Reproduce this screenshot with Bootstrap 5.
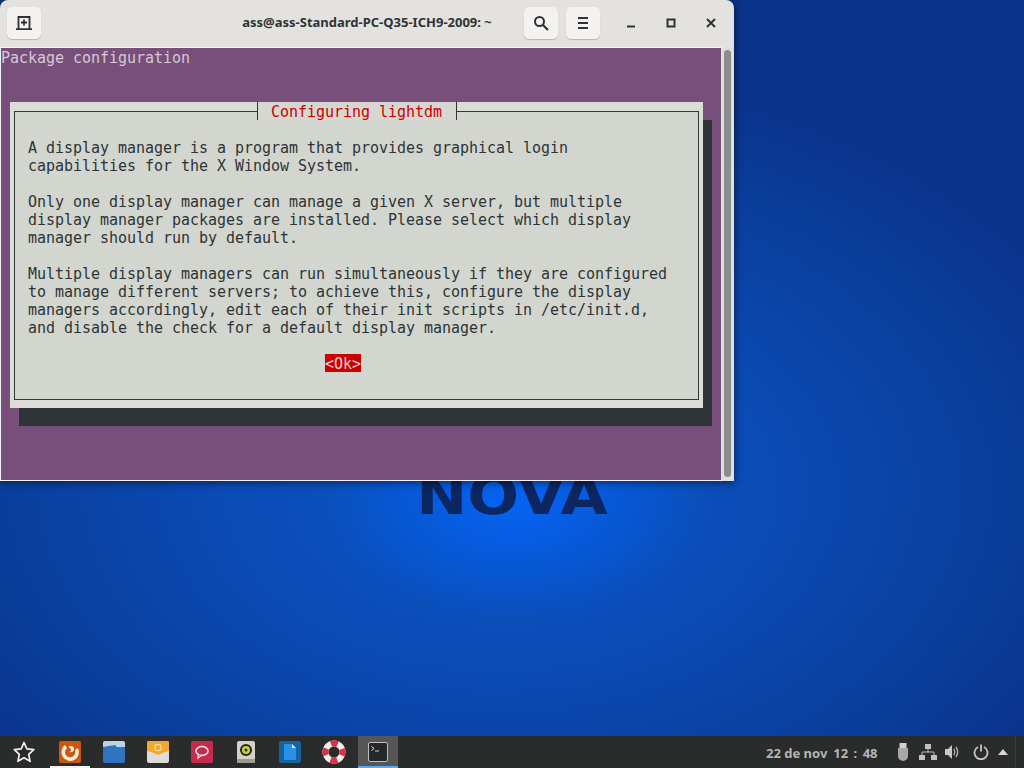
<!DOCTYPE html>
<html lang="es">
<head>
<meta charset="utf-8">
<title>Terminal</title>
<link href="https://cdn.jsdelivr.net/npm/bootstrap@5.3.0/dist/css/bootstrap.min.css" rel="stylesheet">
<style>
html,body{height:100%;margin:0;overflow:hidden}
.desk{position:relative;width:1024px;height:768px;overflow:hidden;background:radial-gradient(ellipse 190px 120px at 515px 500px,rgba(5,100,245,.95) 0%,rgba(5,95,235,.55) 50%,rgba(5,90,225,0) 100%),radial-gradient(ellipse 640px 420px at 500px 490px,#0a55c8 0%,#0a4cb6 40%,#0a3f9e 75%,#0b348c 100%),#0b348c}
.logo-txt{position:absolute;left:412px;top:466px;width:200px;text-align:center;font:700 54px/60px "DejaVu Sans",sans-serif;color:#0b2660;transform:scaleX(1.13)}
.term-win{position:absolute;left:0;top:0;width:734px;height:481px;background:#e4e2de;border-radius:8px 8px 0 0;box-shadow:0 1px 9px rgba(0,0,0,.6)}
.head-bar{height:47px;padding:7px 3px 0 7px}
.hbtn{width:34px;height:32px;background:#f3f2f0;border-radius:5px;box-shadow:0 1px 1px rgba(0,0,0,.2);flex:none}
.hbtn-gap{margin-right:8px}
.wbtn-first{margin-left:11px}
.head-title{left:0;width:734px;top:13px;position:absolute;text-align:center;font:700 13px/18px "Noto Sans","Open Sans",sans-serif;color:#2e3436}
.wbtn{width:40px;height:32px;flex:none}
.term-body{height:432px;margin:1px 0 0 1px;width:733px}
.term-screen{position:relative;width:720px;height:432px;background:#784f7b;font:15px/18px "DejaVu Sans Mono",monospace;letter-spacing:-.03px;color:#d6c8d4;box-shadow:0 0 0 1px #f4f4f4}
.pkg-line{padding-top:1px;white-space:pre}
.dlg-shadow{position:absolute;left:18px;top:72px;width:693px;height:306px;background:#2f3436}
.dlg{position:absolute;left:9px;top:54px;width:693px;height:306px;background:#dcdcd8}
.dlg-frame{position:absolute;left:4px;top:9px;width:685px;height:289px;border:1px solid #2f3a38;background:#d2d6ce}
.dlg-title{position:absolute;left:247px;top:0;width:200px;height:18px;padding:1px 0 0 13px;background:#d5d7d0;border-left:1px solid #2f3436;border-right:1px solid #2f3436;color:#cc0000;white-space:pre}
.dlg-text{position:absolute;left:18px;top:37px;color:#2e3436;white-space:pre}
.ok-btn{position:absolute;left:315px;top:252px;width:36px;height:18px;padding-top:1px;background:#cc0000;color:#e6d6d0;white-space:pre}
.sbar-track{width:13px;height:432px;background:#dfdfdb;position:relative}
.sbar-thumb{width:7px;height:427px;margin:2px 0 0 3px;background:#8b8d8c;border-radius:4px}
.dock{position:absolute;left:0;bottom:0;width:1024px;height:32px;background:#2a2b2b}
.dslot{width:44px;height:32px;flex:none;position:relative}
.dslot.first{width:40px;margin-left:2px;margin-right:2px}
.dslot.on::after{content:"";position:absolute;left:0;right:0;bottom:0;height:2px;background:#f2f2f2}
.dslot.cur{width:40px;margin-left:2px;background:#565656}
.dslot.cur::after{content:"";position:absolute;left:0;right:0;bottom:0;height:2px;background:#5aa9ee}
.star-slot{width:48px;height:32px;flex:none}
.tray-date{font:700 13px/32px "Noto Sans","Open Sans",sans-serif;color:#b6b6b6;position:absolute;left:766px;top:1px;white-space:pre}
.clock-part{margin-left:6px;word-spacing:2px}
.tray{position:absolute;left:891px;top:0;height:32px}
.ts{height:32px;flex:none}
.ts-a{width:24px}.ts-b{width:26px}.ts-c{width:32px}.ts-d{width:12px}
.tray-end{position:absolute;left:1015px;top:0;width:1px;height:32px;background:#3c3c3c}
</style>
</head>
<body>
<div class="desk">
  <div class="logo-txt">NOVA</div>

  <div class="term-win">
    <div class="head-bar d-flex align-items-start">
      <div class="hbtn d-flex align-items-center justify-content-center">
        <svg width="16" height="16" viewBox="0 0 16 16"><path d="M2.500 14V2h11v12M0 14.200h16" fill="none" stroke="#2e3436" stroke-width="1.800"/><path d="M8 4.500v6M5 7.500h6" stroke="#2e3436" stroke-width="1.800"/></svg>
      </div>
      <div class="head-title">ass@ass-Standard-PC-Q35-ICH9-2009: ~</div>
      <div class="ms-auto d-flex">
        <div class="hbtn hbtn-gap d-flex align-items-center justify-content-center">
          <svg width="16" height="16" viewBox="0 0 16 16"><circle cx="6.500" cy="6.500" r="4.500" fill="none" stroke="#2e3436" stroke-width="2"/><path d="M10 10l5 5" stroke="#2e3436" stroke-width="2.200"/></svg>
        </div>
        <div class="hbtn d-flex align-items-center justify-content-center">
          <svg width="16" height="16" viewBox="0 0 16 16"><path d="M3 3h10M3 8h10M3 13h10" stroke="#2e3436" stroke-width="2"/></svg>
        </div>
        <div class="wbtn wbtn-first d-flex align-items-center justify-content-center">
          <svg width="10" height="10" viewBox="0 0 10 10"><path d="M1 8.500h8" stroke="#2e3436" stroke-width="2"/></svg>
        </div>
        <div class="wbtn d-flex align-items-center justify-content-center">
          <svg width="10" height="10" viewBox="0 0 10 10"><rect x="1.500" y="1.500" width="7" height="7" fill="none" stroke="#2e3436" stroke-width="2"/></svg>
        </div>
        <div class="wbtn d-flex align-items-center justify-content-center">
          <svg width="10" height="10" viewBox="0 0 10 10"><path d="M1 1l8 8M9 1l-8 8" stroke="#2e3436" stroke-width="2"/></svg>
        </div>
      </div>
    </div>
    <div class="term-body d-flex">
      <div class="term-screen">
        <div class="pkg-line">Package configuration</div>
        <div class="dlg-shadow"></div>
        <div class="dlg">
          <div class="dlg-frame"></div>
          <div class="dlg-title">Configuring lightdm</div>
          <div class="dlg-text">A display manager is a program that provides graphical login
capabilities for the X Window System.

Only one display manager can manage a given X server, but multiple
display manager packages are installed. Please select which display
manager should run by default.

Multiple display managers can run simultaneously if they are configured
to manage different servers; to achieve this, configure the display
managers accordingly, edit each of their init scripts in /etc/init.d,
and disable the check for a default display manager.</div>
          <div class="ok-btn">&lt;Ok&gt;</div>
        </div>
      </div>
      <div class="sbar-track"><div class="sbar-thumb"></div></div>
    </div>
  </div>

  <div class="dock d-flex align-items-center">
    <div class="star-slot d-flex align-items-center justify-content-center">
      <svg width="24" height="24" viewBox="0 0 24 24"><path d="M12 2.500l2.900 6.400 6.900.8-5.100 4.700 1.400 6.900-6.100-3.500-6.100 3.500 1.400-6.900L2.300 9.700l6.900-.8z" fill="none" stroke="#f2f2f2" stroke-width="1.700" stroke-linejoin="round"/></svg>
    </div>
    <div class="dslot first on d-flex align-items-center justify-content-center">
      <svg width="22" height="22" viewBox="0 0 22 22"><rect width="22" height="22" rx="2" fill="#c9590f"/><path d="M7 5.500A7 7 0 1 0 17.500 8" fill="none" stroke="#f8ecdc" stroke-width="3.600"/><path d="M9.500 5.500c3-1.500 5.500 0 5.500 2.500 0 2.500-2.500 4-4.500 3 1.500-.5 2-1.500 1.500-2.500C11.500 7.500 10.500 7 9.500 5.500z" fill="#f8ecdc"/></svg>
    </div>
    <div class="dslot d-flex align-items-center justify-content-center">
      <svg width="22" height="22" viewBox="0 0 22 22"><rect width="22" height="22" rx="2" fill="#2f74bd"/><path d="M0 2a2 2 0 0 1 2-2h18a2 2 0 0 1 2 2v4H14l-2-2-12 2z" fill="#bcd3e6"/></svg>
    </div>
    <div class="dslot d-flex align-items-center justify-content-center">
      <svg width="22" height="22" viewBox="0 0 22 22"><rect width="22" height="22" rx="2" fill="#dcdcd8"/><path d="M0 2a2 2 0 0 1 2-2h18a2 2 0 0 1 2 2v8l-4 1-7 3-7-3-4-1z" fill="#f0a92e"/><circle cx="11" cy="6.500" r="3.200" fill="none" stroke="#f8dfa6" stroke-width="1.200"/></svg>
    </div>
    <div class="dslot d-flex align-items-center justify-content-center">
      <svg width="22" height="22" viewBox="0 0 22 22"><rect width="22" height="22" rx="2" fill="#c72a4c"/><ellipse cx="11" cy="10" rx="6" ry="4.500" fill="none" stroke="#f6e6e6" stroke-width="1.600"/><path d="M7.500 13.500l-.5 3.500 3.500-2.500" fill="#c72a4c" stroke="#f6e6e6" stroke-width="1.400"/></svg>
    </div>
    <div class="dslot d-flex align-items-center justify-content-center">
      <svg width="18" height="22" viewBox="0 0 18 22"><rect width="18" height="22" rx="2" fill="#d4d2c6"/><rect y="18" width="18" height="4" fill="#9d9b90"/><circle cx="9" cy="9" r="6" fill="#23251e"/><circle cx="9" cy="9" r="4" fill="#c8d62a"/><circle cx="9" cy="9" r="1.500" fill="#23251e"/></svg>
    </div>
    <div class="dslot d-flex align-items-center justify-content-center">
      <svg width="22" height="22" viewBox="0 0 22 22"><rect width="22" height="22" rx="2" fill="#14629e"/><path d="M5 3h8l4 4v12H5z" fill="#2a8fe6"/><path d="M13 3l4 4h-4z" fill="#cfe6f6"/></svg>
    </div>
    <div class="dslot d-flex align-items-center justify-content-center">
      <svg width="24" height="24" viewBox="0 0 24 24"><circle cx="12" cy="12" r="8.500" fill="none" stroke="#f2efe9" stroke-width="6"/><circle cx="12" cy="12" r="8.500" fill="none" stroke="#d9314a" stroke-width="6" stroke-dasharray="6.700 6.650" stroke-dashoffset="3.300"/></svg>
    </div>
    <div class="dslot cur d-flex align-items-center justify-content-center">
      <svg width="20" height="20" viewBox="0 0 20 20"><rect x=".5" y=".5" width="19" height="19" rx="1.500" fill="#24282a" stroke="#bdbdbd"/><path d="M3.500 4.500l2.500 2-2.500 2" fill="none" stroke="#e8e8e8"/><path d="M7 9h4" stroke="#c8c8c8"/></svg>
    </div>
    <div class="tray-date">22 de nov<span class="clock-part">12 : 48</span></div>
    <div class="tray d-flex align-items-center">
      <div class="ts ts-a d-flex align-items-center justify-content-center">
        <svg width="12" height="18" viewBox="0 0 12 18"><path d="M2.500 0h7v5h-7z" fill="#d0d0d0"/><path d="M1 5h10v8a5 5 0 0 1-10 0z" fill="#a8a8a8"/></svg>
      </div>
      <div class="ts ts-b d-flex align-items-center justify-content-center">
        <svg width="18" height="16" viewBox="0 0 18 16"><path d="M6 0h6v5H6zM0 11h6v5H0zM12 11h6v5h-6z" fill="#c0c0c0"/><path d="M9 5v3M3 11V8h12v3" fill="none" stroke="#c0c0c0"/></svg>
      </div>
      <div class="ts ts-a d-flex align-items-center justify-content-center">
        <svg width="16" height="16" viewBox="0 0 16 16"><path d="M0 5h3l4-4v14l-4-4H0z" fill="#c8c8c8"/><path d="M9 5c1 2 1 4 0 6M11 3c2 3 2 7 0 10" fill="none" stroke="#a8a8a8" stroke-width="1.500"/></svg>
      </div>
      <div class="ts ts-c d-flex align-items-center justify-content-center">
        <svg width="16" height="16" viewBox="0 0 16 16"><path d="M5 3a6.500 6.500 0 1 0 6 0" fill="none" stroke="#c4c4c4" stroke-width="1.800"/><path d="M8 .5v7" stroke="#c4c4c4" stroke-width="1.800"/></svg>
      </div>
      <div class="ts ts-d d-flex align-items-center justify-content-center">
        <svg width="10" height="6" viewBox="0 0 10 6"><path d="M5 0l5 6H0z" fill="#d8d8d8"/></svg>
      </div>
    </div>
    <div class="tray-end"></div>
  </div>
</div>
<script src="https://cdn.jsdelivr.net/npm/bootstrap@5.3.0/dist/js/bootstrap.bundle.min.js"></script>
</body>
</html>
